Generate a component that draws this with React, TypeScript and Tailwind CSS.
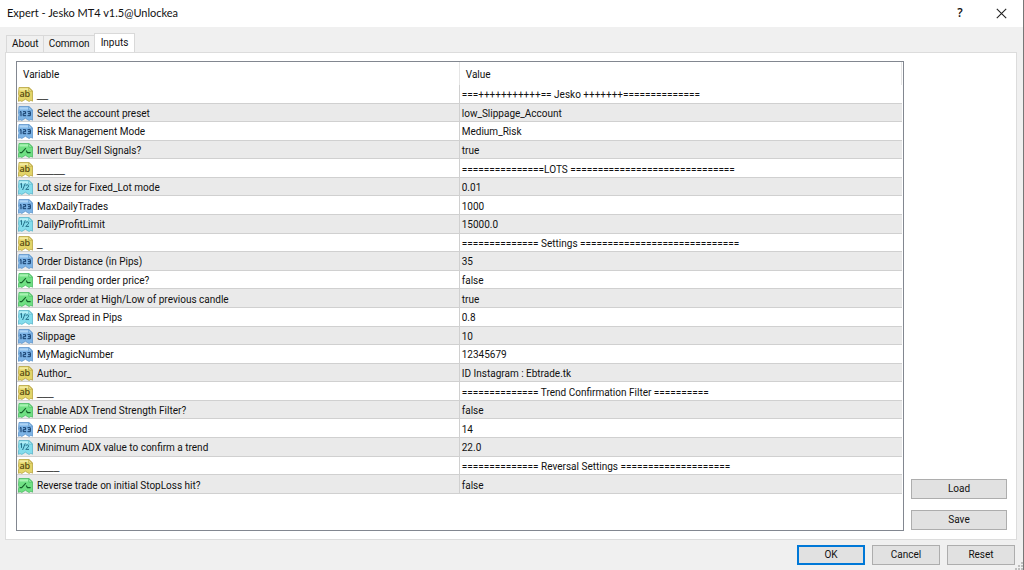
import { useState } from 'react';
import clsx from 'clsx';

type Kind = 'string' | 'int' | 'bool' | 'double';

const tabs = ['About', 'Common', 'Inputs'];

const eq = (n: number) => '='.repeat(n);

const inputs: { kind: Kind; name: string; value: string }[] = [
  { kind: 'string', name: '__', value: `===+++++++++++== Jesko +++++++${eq(14)}` },
  { kind: 'int', name: 'Select the account preset', value: 'low_Slippage_Account' },
  { kind: 'int', name: 'Risk Management Mode', value: 'Medium_Risk' },
  { kind: 'bool', name: 'Invert Buy/Sell Signals?', value: 'true' },
  { kind: 'string', name: '_____', value: `${eq(15)}LOTS ${eq(30)}` },
  { kind: 'double', name: 'Lot size for Fixed_Lot mode', value: '0.01' },
  { kind: 'int', name: 'MaxDailyTrades', value: '1000' },
  { kind: 'double', name: 'DailyProfitLimit', value: '15000.0' },
  { kind: 'string', name: '_', value: `${eq(14)} Settings ${eq(29)}` },
  { kind: 'int', name: 'Order Distance (in Pips)', value: '35' },
  { kind: 'bool', name: 'Trail pending order price?', value: 'false' },
  { kind: 'bool', name: 'Place order at High/Low of previous candle', value: 'true' },
  { kind: 'double', name: 'Max Spread in Pips', value: '0.8' },
  { kind: 'int', name: 'Slippage', value: '10' },
  { kind: 'int', name: 'MyMagicNumber', value: '12345679' },
  { kind: 'string', name: 'Author_', value: 'ID Instagram : Ebtrade.tk' },
  { kind: 'string', name: '___', value: `${eq(14)} Trend Confirmation Filter ${eq(10)}` },
  { kind: 'bool', name: 'Enable ADX Trend Strength Filter?', value: 'false' },
  { kind: 'int', name: 'ADX Period', value: '14' },
  { kind: 'double', name: 'Minimum ADX value to confirm a trend', value: '22.0' },
  { kind: 'string', name: '____', value: `${eq(14)} Reversal Settings ${eq(20)}` },
  { kind: 'bool', name: 'Reverse trade on initial StopLoss hit?', value: 'false' },
];

const palette: Record<Kind, { fill: string; light: string; edge: string; ink: string }> = {
  string: { fill: '#e3d468', light: '#f3eba0', edge: '#b7a340', ink: '#574c12' },
  int: { fill: '#7db4e6', light: '#aed4f5', edge: '#5f96cc', ink: '#123a68' },
  bool: { fill: '#6fe083', light: '#a6f2b1', edge: '#4cba64', ink: '#14602a' },
  double: { fill: '#83dcec', light: '#b7f0f7', edge: '#5bb5ca', ink: '#1b6580' },
};

function TypeIcon({ kind }: { kind: Kind }) {
  const c = palette[kind];
  return (
    <svg width="15" height="15" viewBox="0 0 15 15" className="shrink-0" aria-hidden="true">
      <path
        d="M1 .5h10l3.5 3.3v10.4l-1.6-.9-1.7 1.2-2-1.1-1.8-1.2-1.8 1.2-1.8 1-1.7-.7-1.6.6V11l.5-2-.5-2z"
        fill={c.fill}
        stroke={c.edge}
        strokeWidth=".8"
      />
      <path d="M1.5 1.3h8.8v2.2H1.5z" fill={c.light} />
      <path d="M10.8.8v3.3h3.4z" fill={c.light} stroke={c.edge} strokeWidth=".7" />
      {kind === 'string' && (
        <text x="1.4" y="10.4" fontSize="9" fontFamily="Open Sans, sans-serif" fontWeight="600" fill={c.ink}>ab</text>
      )}
      {kind === 'int' && (
        <path
          d="M1.8 6.2l1.2-.7v4.7M5 5.7h2.6v2H5.2v2h2.9M9.5 5.7h2.8v4H9.5M10 7.7h2.3"
          fill="none"
          stroke={c.ink}
          strokeWidth="1"
        />
      )}
      {kind === 'double' && (
        <>
          <path d="M2.2 4.2l1.3-.9v4.6M7.3 3.3L4.6 10" fill="none" stroke={c.ink} strokeWidth=".9" />
          <path d="M7.8 5.8c.4-1.4 3-1.3 2.8.3-.1 1.2-1.9 2-2.8 3.3h3.2" fill="none" stroke={c.ink} strokeWidth=".9" />
        </>
      )}
      {kind === 'bool' && (
        <path d="M1.8 9.6h1.9l4.2-4.4M8.2 7.4l1.2 2.2h3.2" fill="none" stroke={c.ink} strokeWidth="1.1" />
      )}
    </svg>
  );
}

function DialogButton({ children, primary }: { children: string; primary?: boolean }) {
  return (
    <button
      type="button"
      className={clsx(
        'h-5 w-full bg-[#e1e1e1] text-center leading-4',
        primary ? 'border-2 border-[#0078d7]' : 'border border-[#adadad] hover:border-[#0078d7]'
      )}
    >
      {children}
    </button>
  );
}

export default function App() {
  const [active, setActive] = useState('Inputs');

  return (
    <div className="flex min-h-screen flex-col border-r border-[#777777] bg-[#f0f0f0] font-['Roboto',sans-serif] text-[10px] leading-4 text-[#111111]">
      {/* Title bar */}
      <header className="flex h-[27px] items-center justify-between bg-white pb-px pl-[7px] pr-4">
        <h1 className="font-['Lato',sans-serif] text-[11px]">Expert - Jesko MT4 v1.5@Unlockea</h1>
        <div className="flex items-center gap-8">
          <button type="button" aria-label="Help" className="w-2 font-['Open_Sans',sans-serif] text-[12px] font-semibold">?</button>
          <button type="button" aria-label="Close">
            <svg width="11" height="11" viewBox="0 0 11 11" fill="none" stroke="#222" strokeWidth="1.1">
              <path d="M.8.8l9.4 9.4M10.2.8L.8 10.2" />
            </svg>
          </button>
        </div>
      </header>

      {/* Tabs */}
      <div role="tablist" className="flex items-end pl-[6px] pt-[6px]">
        {tabs.map((tab) => (
          <button
            key={tab}
            type="button"
            role="tab"
            aria-selected={active === tab}
            onClick={() => setActive(tab)}
            className={clsx(
              'border border-b-0 border-[#d9d9d9]',
              active === tab ? '-mb-px h-5 bg-white px-[6px] pb-px' : 'h-[17px] border-r-0 bg-[#f0f0f0] pl-[5px] pr-1'
            )}
          >
            {tab}
          </button>
        ))}
      </div>

      <main className="ml-[5px] mr-[6px] flex flex-1 gap-[7px] border border-[#dcdcdc] bg-white py-2 pl-[10px] pr-[9px]">
        {/* Parameters list */}
        <div className="flex-1 border border-[#828790] pr-px">
          <table className="h-[432px] w-full table-fixed border-collapse text-left leading-[15px]">
            <thead>
              <tr className="h-[23px]">
                <th className="w-1/2 border-r border-[#e5e5e5] pb-0 pl-[6px] pt-[2px] font-normal">Variable</th>
                <th className="border-r border-[#e5e5e5] pb-0 pl-[6px] pt-[2px] font-normal">Value</th>
              </tr>
            </thead>
            <tbody>
              {inputs.map((input) => (
                <tr key={input.name} className="border-b border-[#d0d0d0] even:bg-[#eaeaea]">
                  <td className="border-r border-[#d0d0d0] pb-0 pl-px pr-0 pt-[2px]">
                    <div className="flex items-center gap-1">
                      <TypeIcon kind={input.kind} />
                      <span className={clsx(/^_+$/.test(input.name) && "font-['Liberation_Sans',sans-serif]")}>
                        {input.name}
                      </span>
                    </div>
                  </td>
                  <td className="whitespace-nowrap pb-0 pl-[2px] pr-0 pt-[2px]">{input.value}</td>
                </tr>
              ))}
            </tbody>
          </table>
        </div>

        <div className="flex w-24 flex-col justify-end gap-[11px] pb-px">
          <DialogButton>Load</DialogButton>
          <DialogButton>Save</DialogButton>
        </div>
      </main>

      <footer className="relative flex h-[30px] items-start justify-end gap-[7px] pr-2 pt-[5px]">
        <div className="w-[68px]"><DialogButton primary>OK</DialogButton></div>
        <div className="w-[68px]"><DialogButton>Cancel</DialogButton></div>
        <div className="w-[68px]"><DialogButton>Reset</DialogButton></div>
        {/* Resize grip */}
        <svg width="8" height="8" viewBox="0 0 8 8" className="absolute bottom-0 right-0" fill="#bfbfbf" aria-hidden="true">
          <path d="M6 0h2v2H6zM3 3h2v2H3zM6 3h2v2H6zM0 6h2v2H0zM3 6h2v2H3zM6 6h2v2H6z" />
        </svg>
      </footer>
    </div>
  );
}
